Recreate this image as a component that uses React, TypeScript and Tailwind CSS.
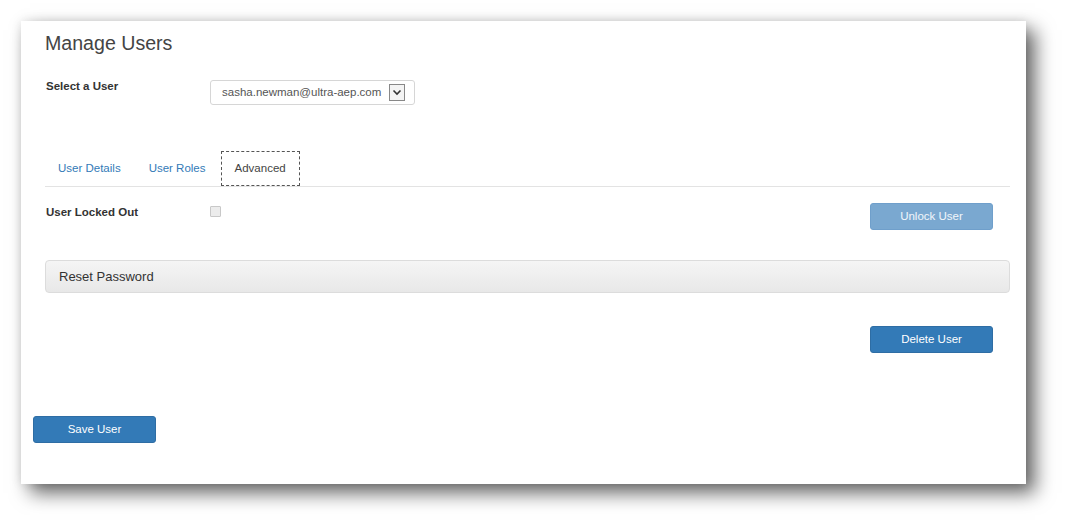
import { useState } from "react";

function Button({ label, disabled }: { label: string; disabled?: boolean }) {
  return (
    <button
      className={
        "w-[123px] h-[27px] rounded-[3px] border text-[11.5px] text-white " +
        (disabled ? "bg-[#7aa8d0] border-[#6f9fcb] text-white/90" : "bg-[#337ab7] border-[#2e6da4]")
      }
    >
      {label}
    </button>
  );
}

export default function App() {
  const [tab] = useState("Advanced");
  const tabs = ["User Details", "User Roles", "Advanced"];

  return (
    <div className="w-full h-[526px] bg-white pt-[21px] pl-[21px] font-['Liberation_Sans',Arial,sans-serif] text-[#333]">
      <div className="w-[1005px] h-[463px] bg-white shadow-[9px_9px_18px_rgba(0,0,0,0.6),0_0_10px_rgba(0,0,0,0.1)] flex flex-col">
        <div className="pl-[24px] pr-[16px] flex flex-col">
          <h1 className="text-[19.6px] leading-[24px] mt-[10px] text-[#444]">Manage Users</h1>

          <div className="flex items-start mt-[25px]">
            <label className="w-[165px] pl-[1px] text-[11.5px] leading-[14px] font-bold -mt-[1px]">Select a User</label>
            <div className="w-[205px] h-[25px] border border-[#d6d6d6] rounded-[3px] flex items-center pl-[11px] pr-[9px] justify-between">
              <span className="text-[11.5px] text-[#555]">sasha.newman@ultra-aep.com</span>
              <span className="w-[16px] h-[17px] border border-[#888] bg-[#f4f4f4] flex items-center justify-center">
                <svg width="10" height="7" viewBox="0 0 10 7">
                  <path d="M1.5 1.5 L5 5 L8.5 1.5" fill="none" stroke="#333" strokeWidth="1.6" />
                </svg>
              </span>
            </div>
          </div>

          <div className="flex mt-[46px] border-b border-[#e3e3e3]">
            {tabs.map((t) => (
              <div
                key={t}
                className={
                  "h-[35px] px-[13px] mr-[2px] flex items-center text-[11.5px] " +
                  (t === tab ? "border border-dashed border-[#555] text-[#444] -mb-[1px] bg-white" : "text-[#337ab7]")
                }
              >
                {t}
              </div>
            ))}
          </div>

          <div className="flex items-start mt-[16px]">
            <label className="w-[165px] pl-[1px] text-[11.5px] leading-[14px] font-bold mt-[2px]">User Locked Out</label>
            <span className="w-[11px] h-[11px] mt-[3px] border border-[#c8c8c8] bg-[#ececec] rounded-[1px]" />
            <div className="ml-auto mr-[17px]">
              <Button label="Unlock User" disabled />
            </div>
          </div>

          <div className="mt-[30px] h-[33px] rounded-[4px] border border-[#dcdcdc] bg-gradient-to-b from-[#f5f5f5] to-[#e8e8e8] flex items-center px-[13px] text-[13px] text-[#333]">
            Reset Password
          </div>

          <div className="flex justify-end mt-[33px] mr-[17px]">
            <Button label="Delete User" />
          </div>
        </div>

        <div className="pl-[12px] mt-[63px]">
          <Button label="Save User" />
        </div>
      </div>
    </div>
  );
}
